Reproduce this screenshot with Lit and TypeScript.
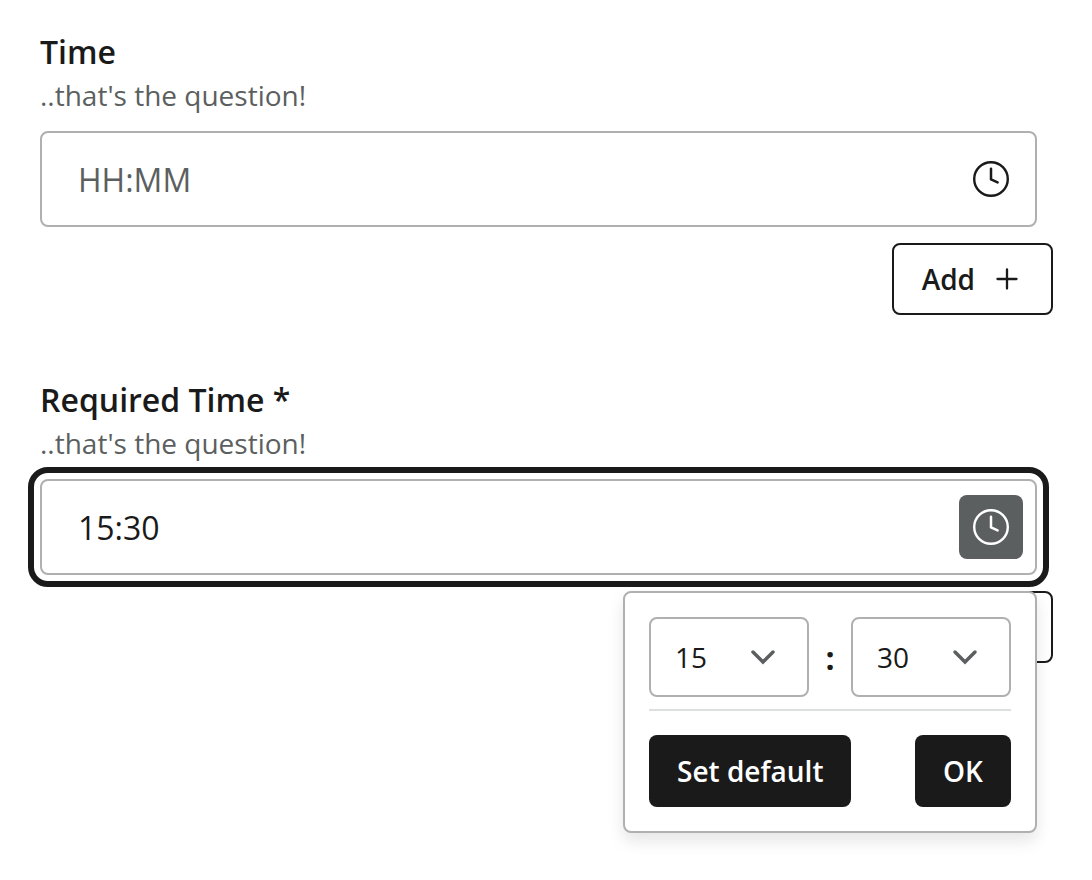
import { LitElement, html, css, svg, nothing } from "lit";
import { customElement, property, state } from "lit/decorators.js";

const clockIcon = html`
  <svg class="clock" viewBox="0 0 40 40" fill="none" stroke="currentColor" stroke-linecap="round" aria-hidden="true">
    ${svg`<circle cx="20" cy="20" r="16.8" stroke-width="2.4"></circle>
    <path d="M20 9.8V20.4L26.6 23.4" stroke-width="2.5" stroke-linejoin="round"></path>`}
  </svg>
`;

const plusIcon = html`
  <svg class="plus" viewBox="0 0 32 32" fill="none" stroke="currentColor" stroke-width="2.3" stroke-linecap="round" aria-hidden="true">
    ${svg`<path d="M16 6.5V25.5M6.5 16H25.5"></path>`}
  </svg>
`;

const chevronIcon = html`
  <svg class="chevron" viewBox="0 0 32 32" fill="none" stroke="currentColor" stroke-width="3.5" stroke-linecap="round" aria-hidden="true">
    ${svg`<path d="M6 11L16 21L26 11"></path>`}
  </svg>
`;

const pad = (n: number) => String(n).padStart(2, "0");

const shared = css`
  :host {
    display: block;
    box-sizing: border-box;
    font-family: "Open Sans", "Noto Sans", sans-serif;
    color: #1a1a1a;
  }
  *,
  *::before,
  *::after {
    box-sizing: border-box;
  }
  button,
  input,
  select {
    margin: 0;
    font: inherit;
    color: inherit;
    outline: none;
  }
  button {
    cursor: pointer;
  }
`;

@customElement("time-picker-menu")
export class TimePickerMenu extends LitElement {
  @property() hour = "15";
  @property() minute = "30";

  static styles = [
    shared,
    css`
      :host {
        padding: 24px;
        border: 2px solid #b0b0b0;
        border-radius: 8px;
        background: #fff;
        box-shadow: 0 8px 16px rgba(0, 0, 0, 0.1);
        font-size: 28px;
      }
      .selects {
        display: flex;
        align-items: center;
        padding-bottom: 12px;
        border-bottom: 2px solid #dce0e0;
      }
      .select {
        display: grid;
        align-items: center;
        width: 160px;
      }
      .select select {
        grid-area: 1 / 1;
        appearance: none;
        width: 100%;
        height: 80px;
        padding: 0 24px;
        border: 2px solid #b0b0b0;
        border-radius: 8px;
        background: #fff;
      }
      .chevron {
        grid-area: 1 / 1;
        justify-self: end;
        width: 32px;
        height: 32px;
        margin-right: 30px;
        color: #5c5f60;
        pointer-events: none;
      }
      .colon {
        width: 42px;
        text-align: center;
        font-size: 32px;
        font-weight: 700;
      }
      .actions {
        display: flex;
        justify-content: space-between;
        padding-top: 24px;
      }
      .action {
        height: 72px;
        padding: 0 28px;
        border: 0;
        border-radius: 8px;
        background: #1a1a1a;
        color: #fff;
        font-weight: 600;
      }
    `,
  ];

  private options(count: number, selected: string) {
    return Array.from({ length: count }, (_, i) => pad(i)).map(
      (v) => html`<option value=${v} ?selected=${v === selected}>${v}</option>`
    );
  }

  private change(part: "hour" | "minute", e: Event) {
    this[part] = (e.target as HTMLSelectElement).value;
    this.dispatchEvent(
      new CustomEvent("time-change", { detail: `${this.hour}:${this.minute}` })
    );
  }

  render() {
    return html`
      <div class="selects">
        <div class="select">
          <select aria-label="Hours" @change=${(e: Event) => this.change("hour", e)}>
            ${this.options(24, this.hour)}
          </select>
          ${chevronIcon}
        </div>
        <span class="colon">:</span>
        <div class="select">
          <select aria-label="Minutes" @change=${(e: Event) => this.change("minute", e)}>
            ${this.options(60, this.minute)}
          </select>
          ${chevronIcon}
        </div>
      </div>
      <div class="actions">
        <button class="action" type="button">Set default</button>
        <button class="action" type="button" @click=${() => this.dispatchEvent(new CustomEvent("menu-close"))}>OK</button>
      </div>
    `;
  }
}

@customElement("time-field")
export class TimeField extends LitElement {
  @property() label = "";
  @property() hint = "";
  @property() value = "";
  @property({ type: Boolean, reflect: true }) open = false;

  static styles = [
    shared,
    css`
      .label {
        display: block;
        font-size: 32px;
        line-height: 44px;
        font-weight: 600;
      }
      .hint {
        margin: 0 0 15px;
        font-size: 28px;
        line-height: 42px;
        color: #5c5f60;
      }
      .control {
        position: relative;
        margin-right: 16px;
      }
      .box {
        display: flex;
        align-items: center;
        height: 96px;
        padding: 0 12px 0 36px;
        border: 2px solid #b0b0b0;
        border-radius: 8px;
        background: #fff;
      }
      :host([open]) .box {
        outline: 6px solid #1a1a1a;
        outline-offset: 6px;
      }
      .input {
        flex: 1;
        min-width: 0;
        height: 64px;
        padding: 0;
        border: 0;
        background: transparent;
        font-size: 32px;
      }
      .input::placeholder {
        color: #5c5f60;
        opacity: 1;
      }
      .toggle {
        display: grid;
        place-items: center;
        width: 64px;
        height: 64px;
        padding: 0;
        border: 0;
        border-radius: 8px;
        background: transparent;
      }
      :host([open]) .toggle {
        background: #5c5f60;
        color: #fff;
      }
      .clock {
        width: 40px;
        height: 40px;
      }
      .menu {
        position: absolute;
        z-index: 1;
        top: calc(100% + 16px);
        right: 0;
      }
      .footer {
        display: flex;
        justify-content: flex-end;
        margin-top: 16px;
      }
      .add {
        display: flex;
        align-items: center;
        gap: 16px;
        height: 72px;
        padding: 0 28px;
        border: 2px solid #1a1a1a;
        border-radius: 8px;
        background: #fff;
        font-size: 28px;
        font-weight: 600;
      }
      .plus {
        width: 32px;
        height: 32px;
      }
    `,
  ];

  render() {
    const [hour, minute] = this.value.split(":");
    return html`
      <label class="label" for="time">${this.label}</label>
      <p class="hint" id="hint">${this.hint}</p>
      <div class="control">
        <div class="box">
          <input
            class="input"
            id="time"
            type="text"
            placeholder="HH:MM"
            aria-describedby="hint"
            .value=${this.value}
            @change=${(e: Event) => (this.value = (e.target as HTMLInputElement).value)}
          />
          <button
            class="toggle"
            type="button"
            aria-label="Choose time"
            aria-expanded=${this.open ? "true" : "false"}
            @click=${() => (this.open = !this.open)}
          >
            ${clockIcon}
          </button>
        </div>
        ${this.open
          ? html`<time-picker-menu
              class="menu"
              .hour=${hour || "00"}
              .minute=${minute || "00"}
              @time-change=${(e: CustomEvent<string>) => (this.value = e.detail)}
              @menu-close=${() => (this.open = false)}
            ></time-picker-menu>`
          : nothing}
      </div>
      <div class="footer">
        <button class="add" type="button">Add ${plusIcon}</button>
      </div>
    `;
  }
}

@customElement("app-root")
export class AppRoot extends LitElement {
  @state() private hint = "..that's the question!";

  static styles = [
    shared,
    css`
      :host {
        min-height: 100vh;
        background: #fff;
      }
      .form {
        display: grid;
        gap: 63px;
        padding: 30px 39px 30px 40px;
      }
    `,
  ];

  render() {
    return html`
      <form class="form">
        <time-field label="Time" hint=${this.hint}></time-field>
        <time-field label="Required Time *" hint=${this.hint} value="15:30" open></time-field>
      </form>
    `;
  }
}
